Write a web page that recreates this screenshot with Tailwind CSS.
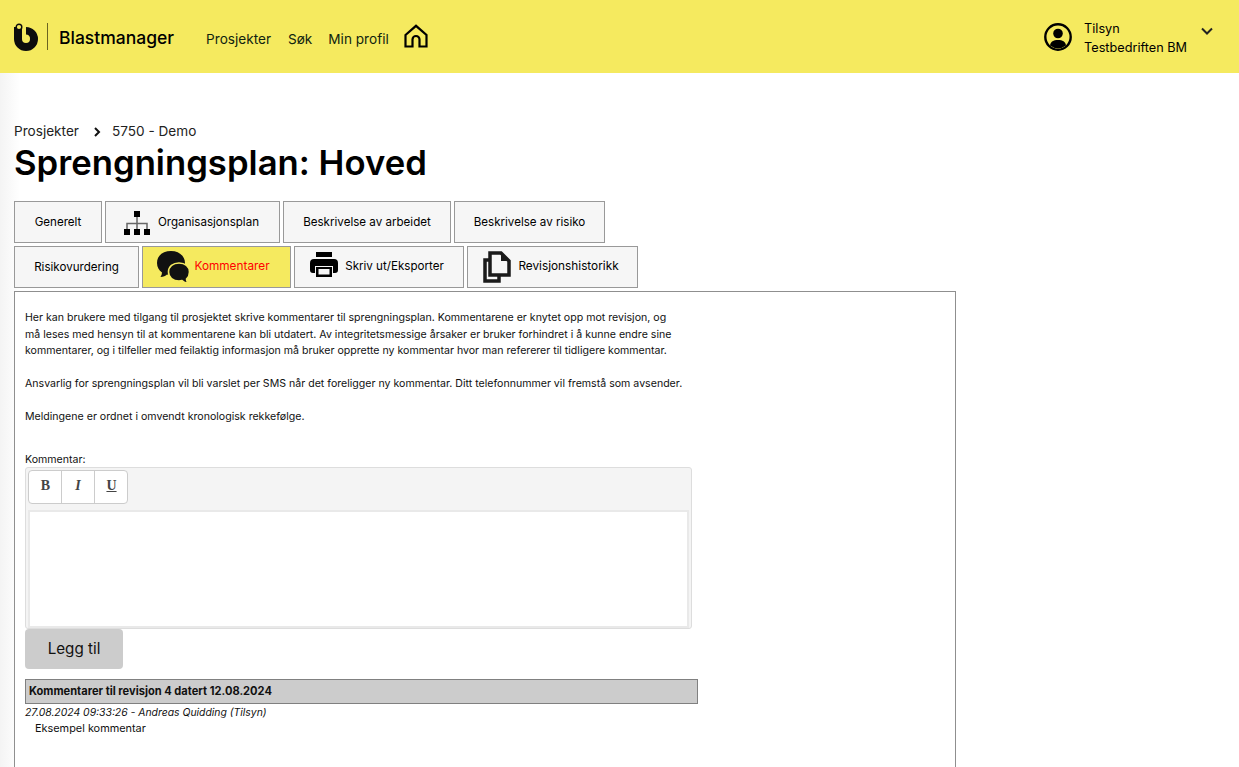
<!DOCTYPE html>
<html lang="en">
<head>
  <meta charset="UTF-8">
  <title>Sprengningsplan: Hoved - Blastmanager</title>
  <script src="https://cdn.jsdelivr.net/npm/@tailwindcss/browser@4"></script>
</head>
<body class="h-[767px] overflow-hidden bg-white font-['Inter',sans-serif] text-black">
  <header class="flex h-[73px] items-center justify-between bg-[#f5ea5f] pl-[14px] pr-[25px]">
    <div class="flex items-center">
      <svg width="24" height="28" viewBox="0 0 24 28" class="mr-[9px]">
        <path d="M4 4v12a8 8 0 1 0 8-8" fill="none" stroke="#0d0d0d" stroke-width="8"/>
        <circle cx="5" cy="4" r="2.800" fill="#f5ea5f" stroke="#0d0d0d" stroke-width="1.400"/>
        <circle cx="12" cy="15" r="3.500" fill="#f5ea5f"/>
      </svg>
      <div class="mr-[11px] h-[27px] w-px bg-[#6b6420]"></div>
      <span class="mr-[32px] pt-[2px] text-[17.500px] leading-none font-medium">Blastmanager</span>
      <nav class="flex items-center text-[13.600px] text-[#10240f]">
        <a href="#" class="mr-[17px] pt-[5px]">Prosjekter</a>
        <a href="#" class="mr-[16px] pt-[5px]">Søk</a>
        <a href="#" class="mr-[15px] pt-[5px]">Min profil</a>
        <svg width="24" height="24" viewBox="0 0 24 24" fill="none" stroke="#000" stroke-width="2.200"><path d="M1.500 11 12 1.800 22.500 11v11.500h-7v-7a3.500 3.500 0 0 0-7 0v7h-7z"/></svg>
      </nav>
    </div>
    <div class="flex items-center">
      <svg width="28" height="28" viewBox="0 0 28 28" class="mr-[12px]">
        <circle cx="14" cy="14" r="12.700" fill="none" stroke="#000" stroke-width="2.400"/>
        <circle cx="14" cy="10.500" r="4.800"/>
        <path d="M6 22.500c.6-4 3.400-5.500 8-5.500s7.400 1.500 8 5.500a13 13 0 0 1-16 0z"/>
      </svg>
      <div class="mr-[13px] mt-[2px] text-[12.700px] leading-[19px]">
        <div>Tilsyn</div>
        <div>Testbedriften BM</div>
      </div>
      <svg width="14" height="14" viewBox="0 0 14 14" fill="none" stroke="#222" stroke-width="2" class="mb-[12px]"><path d="M2 4.500 7 9.500l5-5"/></svg>
    </div>
  </header>

  <main class="h-[694px] bg-linear-to-r from-[#f4f4f4] to-white to-[20px] pl-[14px] pt-[50px]">
    <div class="flex items-center text-[13.600px] leading-[17px] text-[#222]">
      <span>Prosjekter</span>
      <svg width="8" height="10" viewBox="0 0 8 10" fill="none" stroke="#111" stroke-width="2" class="ml-[14px] mr-[11px]"><path d="m2 1 4 4-4 4"/></svg>
      <span>5750 - Demo</span>
    </div>
    <h1 class="mt-px text-[34.700px] leading-[42px] font-semibold">Sprengningsplan: Hoved</h1>

    <div class="mt-[18px] flex gap-[3px] text-[11.600px]">
      <a class="flex h-[42px] w-[88px] items-center justify-center border border-[#999] bg-[#f6f6f6] pt-px">Generelt</a>
      <a class="flex h-[42px] w-[175px] items-center justify-center border border-[#999] bg-[#f6f6f6] pr-[2px] pt-px">
        <svg width="26" height="24" viewBox="0 0 26 24" class="mr-[8px]">
          <path d="M10 0h6v6h-6zM0 18h6v6H0zM10 18h6v6h-6zM20 18h6v6h-6z"/>
          <path d="M13 6v12M3 18v-5.500h20V18" fill="none" stroke="#666" stroke-width="1.500"/>
        </svg>
        Organisasjonsplan
      </a>
      <a class="flex h-[42px] w-[168px] items-center justify-center border border-[#999] bg-[#f6f6f6] pt-px">Beskrivelse av arbeidet</a>
      <a class="flex h-[42px] w-[151px] items-center justify-center border border-[#999] bg-[#f6f6f6] pt-px">Beskrivelse av risiko</a>
    </div>
    <div class="mt-[3px] flex gap-[3px] text-[11.600px]">
      <a class="flex h-[42px] w-[125px] items-center justify-center border border-[#999] bg-[#f6f6f6] pt-px">Risikovurdering</a>
      <a class="flex h-[42px] w-[149px] items-center justify-center border border-[#999] bg-[#f5ea5f] pr-[7px] text-[11.800px] text-[#f00]">
        <svg width="34" height="34" viewBox="0 0 34 34" class="mr-[4px]">
          <path d="M15 1C7 1 1 5.500 1 13c0 4 2 7.500 5 9.500 0 1.500-.5 3-1.500 4.500 3 0 5-1 6.500-2.500 1 .3 3 .5 4 .5 8 0 14-5 14-12S23 1 15 1z" fill="#111"/>
          <path d="M23 13c-6 0-10.500 3.500-10.500 9s4.500 9 10.500 9c1 0 2-.1 3-.4 1.500 1.500 3.500 2.400 6 2.400-1-1.200-1.500-2.500-1.500-4 2-1.700 3-4 3-7 0-5.500-4.500-9-10.500-9z" fill="#111" stroke="#f5ea5f" stroke-width="1.600"/>
        </svg>
        Kommentarer
      </a>
      <a class="flex h-[42px] w-[170px] items-center justify-center border border-[#999] bg-[#f6f6f6] pr-[4px]">
        <svg width="28" height="26" viewBox="0 0 28 26" class="mr-[7px] mb-[4px]">
          <path d="M6 0h16v5H6z"/>
          <path d="M4 7h20a4 4 0 0 1 4 4v7a3 3 0 0 1-3 3h-2v-7H5v7H3a3 3 0 0 1-3-3v-7a4 4 0 0 1 4-4z"/>
          <path d="M6 15h16v10H6z"/>
          <path d="M8.500 17h11v5.500h-11z" fill="#f6f6f6"/>
        </svg>
        Skriv ut/Eksporter
      </a>
      <a class="flex h-[42px] w-[171px] items-center justify-center border border-[#999] bg-[#f6f6f6] pr-[3px] text-[11.800px]">
        <svg width="28" height="32" viewBox="0 0 28 32" fill="none" stroke="#1a1a1a" stroke-width="3.500" class="mr-[7px]">
          <path d="M7 2h11l8 8v14H7z"/>
          <path d="M18 1v9h9l-9-9z" fill="#1a1a1a" stroke="none"/>
          <path d="M7 9H2v21h14v-6"/>
        </svg>
        Revisjonshistorikk
      </a>
    </div>

    <section class="mt-[3px] h-[476px] w-[942px] border border-b-0 border-[#8f8f8f] bg-white px-[10px] pt-[18px] text-[10.600px] leading-[16.500px] text-[#111]">
      <div class="w-[667px]">
        <div class="w-[658px]">
          <p>Her kan brukere med tilgang til prosjektet skrive kommentarer til sprengningsplan. Kommentarene er knytet opp mot revisjon, og må leses med hensyn til at kommentarene kan bli utdatert. Av integritetsmessige årsaker er bruker forhindret i å kunne endre sine kommentarer, og i tilfeller med feilaktig informasjon må bruker opprette ny kommentar hvor man refererer til tidligere kommentar.</p>
          <p class="mt-[16.500px]">Ansvarlig for sprengningsplan vil bli varslet per SMS når det foreligger ny kommentar. Ditt telefonnummer vil fremstå som avsender.</p>
          <p class="mt-[16.500px]">Meldingene er ordnet i omvendt kronologisk rekkefølge.</p>
        </div>

        <label class="mt-[26px] block leading-[15px]">Kommentar:</label>
        <div class="h-[162px] rounded-[3px] border border-[#ddd] bg-[#f4f4f4] p-[2px]">
          <div class="flex h-[34px] w-[100px] rounded-[4px] border border-[#ccc] bg-white font-['Liberation_Serif',serif] text-[14px] text-[#444]">
            <span class="flex w-[33px] items-center justify-center border-r border-[#ccc] pl-px font-bold">B</span>
            <span class="flex w-[33px] items-center justify-center border-r border-[#ccc] font-bold italic">I</span>
            <span class="flex flex-1 items-center justify-center pl-px font-bold underline">U</span>
          </div>
          <div class="mt-[6px] h-[118px] border-2 border-[#e9e9e9] bg-white"></div>
        </div>
      </div>
      <button class="block h-[40px] w-[98px] rounded-[4px] bg-[#ccc] pt-px text-[15.200px] text-[#111]">Legg til</button>
      <div class="mt-[10px] flex h-[25px] w-[673px] items-center border border-[#808080] bg-[#ccc] pl-[3px] text-[11.100px] font-bold">Kommentarer til revisjon 4 datert 12.08.2024</div>
      <div class="mt-px text-[10.400px] italic">27.08.2024 09:33:26 - Andreas Quidding (Tilsyn)</div>
      <div class="pl-[10px] text-[10.900px] leading-[15px]">Eksempel kommentar</div>
    </section>
  </main>
</body>
</html>
